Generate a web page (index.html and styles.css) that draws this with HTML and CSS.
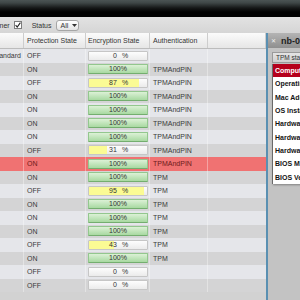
FILE: index.html
```html
<!DOCTYPE html>
<html>
<head>
    <title>BitLocker Status</title>
    <link rel="stylesheet" href="styles.css">
</head>
<body>
    <div class="topbar"></div>

    <div class="toolbar">
        <span class="label owner">Owner</span>
        <span class="check">
            <svg width="6" height="6" viewBox="0 0 6 6"><polyline points="0.6,3.2 2.2,5 5.4,0.6" fill="none" stroke="#222" stroke-width="1.1"/></svg>
        </span>
        <span class="label status">Status</span>
        <span class="select">All
            <svg class="arrow" width="5" height="3" viewBox="0 0 5 3"><polygon points="0,0 5,0 2.5,3" fill="#333"/></svg>
        </span>
    </div>

    <div class="main">
        <div class="grid">
            <div class="row head">
                <div class="c c1"></div>
                <div class="c c2">Protection State</div>
                <div class="c c3">Encryption State</div>
                <div class="c c4">Authentication</div>
                <div class="c c5"></div>
            </div>

            <div class="row">
                <div class="c c1 compliance"><span>Standard</span></div>
                <div class="c c2">OFF</div>
                <div class="c c3"><div class="bar" style="--p:0%"><span class="num">0</span><span class="pct">%</span></div></div>
                <div class="c c4"></div>
                <div class="c c5"></div>
            </div>
            <div class="row">
                <div class="c c1"></div>
                <div class="c c2">ON</div>
                <div class="c c3"><div class="bar done">100%</div></div>
                <div class="c c4">TPMAndPIN</div>
                <div class="c c5"></div>
            </div>
            <div class="row">
                <div class="c c1"></div>
                <div class="c c2">OFF</div>
                <div class="c c3"><div class="bar" style="--p:87%"><span class="num">87</span><span class="pct">%</span></div></div>
                <div class="c c4">TPMAndPIN</div>
                <div class="c c5"></div>
            </div>
            <div class="row">
                <div class="c c1"></div>
                <div class="c c2">ON</div>
                <div class="c c3"><div class="bar done">100%</div></div>
                <div class="c c4">TPMAndPIN</div>
                <div class="c c5"></div>
            </div>
            <div class="row">
                <div class="c c1"></div>
                <div class="c c2">ON</div>
                <div class="c c3"><div class="bar done">100%</div></div>
                <div class="c c4">TPMAndPIN</div>
                <div class="c c5"></div>
            </div>
            <div class="row">
                <div class="c c1"></div>
                <div class="c c2">ON</div>
                <div class="c c3"><div class="bar done">100%</div></div>
                <div class="c c4">TPMAndPIN</div>
                <div class="c c5"></div>
            </div>
            <div class="row">
                <div class="c c1"></div>
                <div class="c c2">ON</div>
                <div class="c c3"><div class="bar done">100%</div></div>
                <div class="c c4">TPMAndPIN</div>
                <div class="c c5"></div>
            </div>
            <div class="row">
                <div class="c c1"></div>
                <div class="c c2">OFF</div>
                <div class="c c3"><div class="bar" style="--p:31%"><span class="num">31</span><span class="pct">%</span></div></div>
                <div class="c c4">TPMAndPIN</div>
                <div class="c c5"></div>
            </div>
            <div class="row alert">
                <div class="c c1"></div>
                <div class="c c2">ON</div>
                <div class="c c3"><div class="bar done">100%</div></div>
                <div class="c c4">TPMAndPIN</div>
                <div class="c c5"></div>
            </div>
            <div class="row">
                <div class="c c1"></div>
                <div class="c c2">ON</div>
                <div class="c c3"><div class="bar done">100%</div></div>
                <div class="c c4">TPM</div>
                <div class="c c5"></div>
            </div>
            <div class="row">
                <div class="c c1"></div>
                <div class="c c2">OFF</div>
                <div class="c c3"><div class="bar" style="--p:95%"><span class="num">95</span><span class="pct">%</span></div></div>
                <div class="c c4">TPM</div>
                <div class="c c5"></div>
            </div>
            <div class="row">
                <div class="c c1"></div>
                <div class="c c2">ON</div>
                <div class="c c3"><div class="bar done">100%</div></div>
                <div class="c c4">TPM</div>
                <div class="c c5"></div>
            </div>
            <div class="row">
                <div class="c c1"></div>
                <div class="c c2">ON</div>
                <div class="c c3"><div class="bar done">100%</div></div>
                <div class="c c4">TPM</div>
                <div class="c c5"></div>
            </div>
            <div class="row">
                <div class="c c1"></div>
                <div class="c c2">ON</div>
                <div class="c c3"><div class="bar done">100%</div></div>
                <div class="c c4">TPM</div>
                <div class="c c5"></div>
            </div>
            <div class="row">
                <div class="c c1"></div>
                <div class="c c2">OFF</div>
                <div class="c c3"><div class="bar" style="--p:43%"><span class="num">43</span><span class="pct">%</span></div></div>
                <div class="c c4">TPM</div>
                <div class="c c5"></div>
            </div>
            <div class="row">
                <div class="c c1"></div>
                <div class="c c2">ON</div>
                <div class="c c3"><div class="bar done">100%</div></div>
                <div class="c c4">TPM</div>
                <div class="c c5"></div>
            </div>
            <div class="row">
                <div class="c c1"></div>
                <div class="c c2">OFF</div>
                <div class="c c3"><div class="bar" style="--p:0%"><span class="num">0</span><span class="pct">%</span></div></div>
                <div class="c c4"></div>
                <div class="c c5"></div>
            </div>
            <div class="row">
                <div class="c c1"></div>
                <div class="c c2">OFF</div>
                <div class="c c3"><div class="bar" style="--p:0%"><span class="num">0</span><span class="pct">%</span></div></div>
                <div class="c c4"></div>
                <div class="c c5"></div>
            </div>
        </div>

        <div class="panel">
            <div class="panel-title"><span class="close">&#x2715;</span>nb-0142</div>
            <div class="panel-body">
                <div class="tab">TPM status</div>
                <div class="list">
                    <div class="item selected">Computer Name</div>
                    <div class="item">Operating System</div>
                    <div class="item">Mac Address</div>
                    <div class="item">OS Install Date</div>
                    <div class="item">Hardware Vendor</div>
                    <div class="item">Hardware Model</div>
                    <div class="item">Hardware Serial</div>
                    <div class="item">BIOS Manufacturer</div>
                    <div class="item">BIOS Version</div>
                </div>
            </div>
        </div>
    </div>
</body>
</html>
```

FILE: styles.css
```css
body {
    margin: 0;
    height: 300px;
    overflow: hidden;
    font-family: "Liberation Sans", Arial, sans-serif;
    font-size: 7px;
    color: #3a3a3a;
    background-color: #c3c3c3;
}

.topbar {
    height: 17px;
    background: linear-gradient(#4b5454 0, #3e4646 3px, #151717 8px, #000 12px, #000 17px);
}

.toolbar {
    height: 16px;
    display: flex;
    align-items: center;
    background: linear-gradient(#e2e2e2, #d5d5d5);
    white-space: nowrap;
}

.label {
    color: #333;
}

.owner {
    margin-left: -11px;
}

.check {
    width: 6px;
    height: 6px;
    margin-left: 4px;
    border: 1px solid #7c7c7c;
    background-color: #fff;
    display: flex;
}

.status {
    margin-left: 10px;
}

.select {
    box-sizing: border-box;
    height: 11px;
    width: 23px;
    margin-left: 5px;
    padding-left: 3px;
    border: 1px solid #a6a6a6;
    border-radius: 3px;
    background: linear-gradient(#fff, #e4e4e4);
    display: flex;
    align-items: center;
    color: #333;
}

.select .arrow {
    margin-left: 4px;
}

.main {
    display: flex;
    height: 267px;
}

.grid {
    width: 266px;
    flex: none;
    background-color: #d2d2d2;
}

.row {
    display: flex;
    height: 13.5px;
    align-items: center;
    white-space: nowrap;
    background-color: #d4d4d5;
}

.row:nth-child(even) {
    background-color: #e5e6ea;
}

.row.alert {
    background-color: #f07272;
    color: #6e1a1a;
}

.row.head {
    height: 16px;
    background: linear-gradient(#fbfbfb, #e6e6e6);
    border-bottom: 1px solid #bcbcbc;
    box-sizing: border-box;
    color: #333;
}

.c {
    box-sizing: border-box;
    height: 100%;
    padding-left: 3px;
    display: flex;
    align-items: center;
    overflow: hidden;
    border-right: 1px solid rgba(255, 255, 255, 0.35);
}

.head .c {
    border-right: 1px solid #cdcdcd;
}

.c1 { width: 24px; }
.c2 { width: 62px; }
.c3 { width: 64px; padding-left: 2px; }
.c4 { width: 58px; }
.c5 { width: 58px; border-right: none; }

.compliance {
    justify-content: flex-end;
    padding: 0 2px 0 0;
}

.bar {
    box-sizing: border-box;
    width: 60px;
    height: 10px;
    border: 1px solid #c6c6c6;
    border-radius: 1px;
    background:
        linear-gradient(90deg, #fbfb94 var(--p), transparent var(--p)),
        linear-gradient(#fdfdfd, #ebebeb);
    display: flex;
    align-items: center;
    justify-content: center;
    color: #333;
    line-height: 8px;
}

.bar.done {
    border-color: #93c78e;
    border-bottom-color: #74ae6f;
    background: linear-gradient(#dcf1d6, #a8d9a1);
}

.num {
    display: inline-block;
    width: 9px;
    text-align: right;
}

.pct {
    margin-left: 5px;
}

.panel {
    flex: 1;
    min-width: 0;
    overflow: hidden;
    border-left: 2px solid #5a90b2;
    background-color: #c3c3c3;
    white-space: nowrap;
}

.panel-title {
    height: 15px;
    padding-left: 3px;
    display: flex;
    align-items: center;
    background: linear-gradient(#b4b4b4, #8f8f8f);
    color: #1e1e1e;
    font-size: 9px;
    font-weight: bold;
}

.close {
    color: #f0f0f0;
    font-size: 6px;
    font-weight: normal;
    margin-right: 5px;
}

.panel-body {
    padding: 4px 0 0 4px;
}

.tab {
    box-sizing: border-box;
    width: 80px;
    height: 11px;
    padding-left: 3px;
    border: 1px solid #9a9a9a;
    background: linear-gradient(#e4e4e4, #cfcfcf);
    display: flex;
    align-items: center;
    color: #333;
    font-size: 6.5px;
}

.list {
    width: 150px;
    margin-top: 1px;
    background-color: #fff;
    border-left: 1px solid #6a6a6a;
    box-shadow: 1px 1px 2px rgba(0, 0, 0, 0.35);
}

.item {
    height: 13.3px;
    padding-left: 2px;
    display: flex;
    align-items: center;
    font-weight: bold;
    color: #141414;
}

.item.selected {
    background-color: #b5001c;
    color: #fff;
}
```
